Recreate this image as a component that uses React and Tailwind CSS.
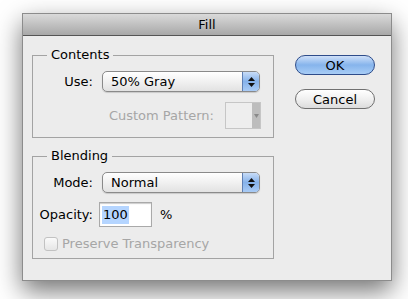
import React from "react";

const FONT = { fontFamily: '"DejaVu Sans", "Liberation Sans", sans-serif' };

// aqua-style popup menu
const PopUp = ({ value }) => (
  <div className="flex h-[21px] w-[158px] overflow-hidden rounded-[5px] border border-[#8a8a8a] bg-gradient-to-b from-[#ffffff] via-[#f1f1f1] to-[#e2e2e2] shadow-[0_1px_1px_rgba(0,0,0,0.15)]">
    <div className="flex flex-1 items-center pl-[8px] text-[13px] leading-none text-black">
      {value}
    </div>
    <div className="flex w-[17px] flex-col items-center justify-center gap-[2px] border-l border-[#5f7fb3] bg-gradient-to-b from-[#c8dcf7] via-[#86b2ea] to-[#a9cbf5]">
      <svg width="7" height="4" viewBox="0 0 7 4">
        <path d="M3.5 0 L7 4 L0 4 Z" fill="#111" />
      </svg>
      <svg width="7" height="4" viewBox="0 0 7 4">
        <path d="M0 0 L7 0 L3.5 4 Z" fill="#111" />
      </svg>
    </div>
  </div>
);

const Group = ({ title, children, className }) => (
  <fieldset
    className={`w-[242px] border border-[#a3a3a3] px-0 ${className || ""}`}
  >
    <legend className="ml-[14px] px-[4px] text-[13px] leading-[16px] text-black">
      {title}
    </legend>
    {children}
  </fieldset>
);

export default function App() {
  return (
    <div
      className="h-[299px] w-[408px] overflow-hidden bg-white pl-[22px] pt-[13px]"
      style={FONT}
    >
      <div className="flex h-[268px] w-[370px] flex-col border border-[#8c8c8c] bg-[#ececec] shadow-[0_10px_24px_rgba(0,0,0,0.55)]">
        {/* title bar */}
        <div className="flex h-[22px] items-center justify-center border-b border-[#555] bg-gradient-to-b from-[#dadada] to-[#a8a8a8] text-[13px] text-black">
          Fill
        </div>

        <div className="flex pl-[9px]">
          <div className="flex flex-col">
            <Group title="Contents" className="mt-[11px] pb-[8px]">
              <div className="mt-[8px] flex items-center">
                <span className="w-[60px] text-right text-[13px]">Use:</span>
                <div className="ml-[9px]">
                  <PopUp value="50% Gray" />
                </div>
              </div>
              <div className="mt-[10px] flex items-center justify-end pr-[12px]">
                <span className="text-[13px] text-[#a6a6a6]">
                  Custom Pattern:
                </span>
                <div className="ml-[11px] flex h-[27px] w-[36px] border border-[#c6c6c6] bg-[#eeeeee]">
                  <div className="flex-1" />
                  <div className="flex w-[8px] items-center justify-center bg-[#bdbdbd]">
                    <svg width="5" height="4" viewBox="0 0 5 4">
                      <path d="M0 0 L5 0 L2.5 4 Z" fill="#8a8a8a" />
                    </svg>
                  </div>
                </div>
              </div>
            </Group>

            <Group title="Blending" className="mt-[10px] pb-[7px]">
              <div className="mt-[8px] flex items-center">
                <span className="w-[60px] text-right text-[13px]">Mode:</span>
                <div className="ml-[9px]">
                  <PopUp value="Normal" />
                </div>
              </div>
              <div className="mt-[9px] flex items-center">
                <span className="w-[60px] text-right text-[13px]">
                  Opacity:
                </span>
                <div className="ml-[6px] flex h-[25px] w-[53px] items-center border border-[#a9a9a9] bg-white pl-[2px] shadow-[inset_0_1px_1px_rgba(0,0,0,0.2)]">
                  <span className="bg-[#b5d5ff] px-[1px] text-[13px] leading-[18px]">
                    100
                  </span>
                </div>
                <span className="ml-[8px] text-[13px]">%</span>
              </div>
              <div className="mt-[10px] flex h-[14px] items-center pl-[11px] leading-[14px]">
                <div className="h-[14px] w-[14px] rounded-[3px] border border-[#c2c2c2] bg-gradient-to-b from-[#fafafa] to-[#e6e6e6]" />
                <span className="ml-[4px] text-[13px] text-[#a6a6a6]">
                  Preserve Transparency
                </span>
              </div>
            </Group>
          </div>

          {/* buttons */}
          <div className="ml-[21px] mt-[19px] flex flex-col gap-[14px]">
            <button className="h-[20px] w-[80px] rounded-full border border-[#2e4c8a] bg-gradient-to-b from-[#cfe0f8] via-[#86b4ec] to-[#a8cdf6] text-[13px] leading-none text-black">
              OK
            </button>
            <button className="h-[20px] w-[80px] rounded-full border border-[#707070] bg-gradient-to-b from-[#ffffff] via-[#f0f0f0] to-[#dcdcdc] text-[13px] leading-none text-black">
              Cancel
            </button>
          </div>
        </div>
      </div>
    </div>
  );
}
